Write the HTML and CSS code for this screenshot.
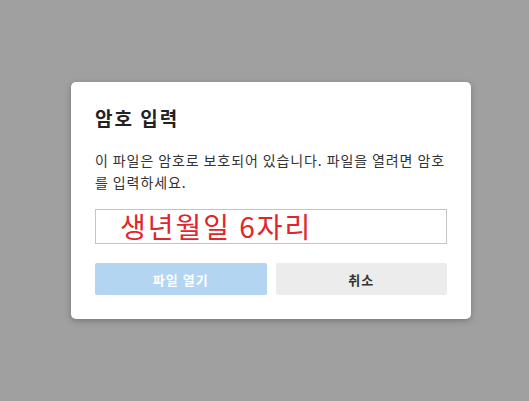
FILE: index.html
```html
<html>
<head>
  <meta charset="utf-8">
  <link rel="stylesheet" href="styles.css">
</head>
<body>
  <div class="overlay">
    <div class="dialog">
      <div class="dialog-title">암호 입력</div>
      <p class="dialog-text">이 파일은 암호로 보호되어 있습니다. 파일을 열려면 암호를 입력하세요.</p>
      <div class="password-field">생년월일 6자리</div>
      <div class="dialog-actions">
        <button class="btn btn-primary" disabled>파일 열기</button>
        <button class="btn btn-cancel">취소</button>
      </div>
    </div>
  </div>
</body>
</html>
```

FILE: styles.css
```css
* {
  box-sizing: border-box;
  margin: 0;
  padding: 0;
}

body {
  background-color: #a0a0a0;
  font-family: "Noto Sans CJK KR", "Noto Sans", sans-serif;
}

.overlay {
  width: 529px;
  height: 401px;
  padding: 82px 0 0 71px;
}

.dialog {
  width: 400px;
  background-color: #ffffff;
  border-radius: 5px;
  box-shadow: 0 2px 6px rgba(0, 0, 0, 0.25);
  padding: 24px;
}

.dialog-title {
  font-size: 19px;
  font-weight: bold;
  line-height: 24px;
  letter-spacing: 2px;
  color: #222;
  margin-bottom: 19px;
}

.dialog-text {
  font-size: 14px;
  line-height: 22px;
  letter-spacing: 0.9px;
  color: #333;
  margin-bottom: 16px;
}

.password-field {
  height: 35px;
  border: 1px solid #c4c4c4;
  padding-left: 24px;
  font-size: 28px;
  line-height: 33px;
  letter-spacing: 2px;
  color: #e0252b;
}

.dialog-actions {
  display: flex;
  gap: 9px;
  margin-top: 19px;
}

.btn {
  flex: 1;
  height: 32px;
  border: none;
  border-radius: 2px;
  font-family: "Noto Sans CJK KR", "Noto Sans", sans-serif;
  font-size: 13px;
  font-weight: bold;
  letter-spacing: 1px;
}

.btn-primary {
  background-color: #b3d5f1;
  color: #ffffff;
}

.btn-cancel {
  background-color: #ececec;
  color: #333;
}
```
